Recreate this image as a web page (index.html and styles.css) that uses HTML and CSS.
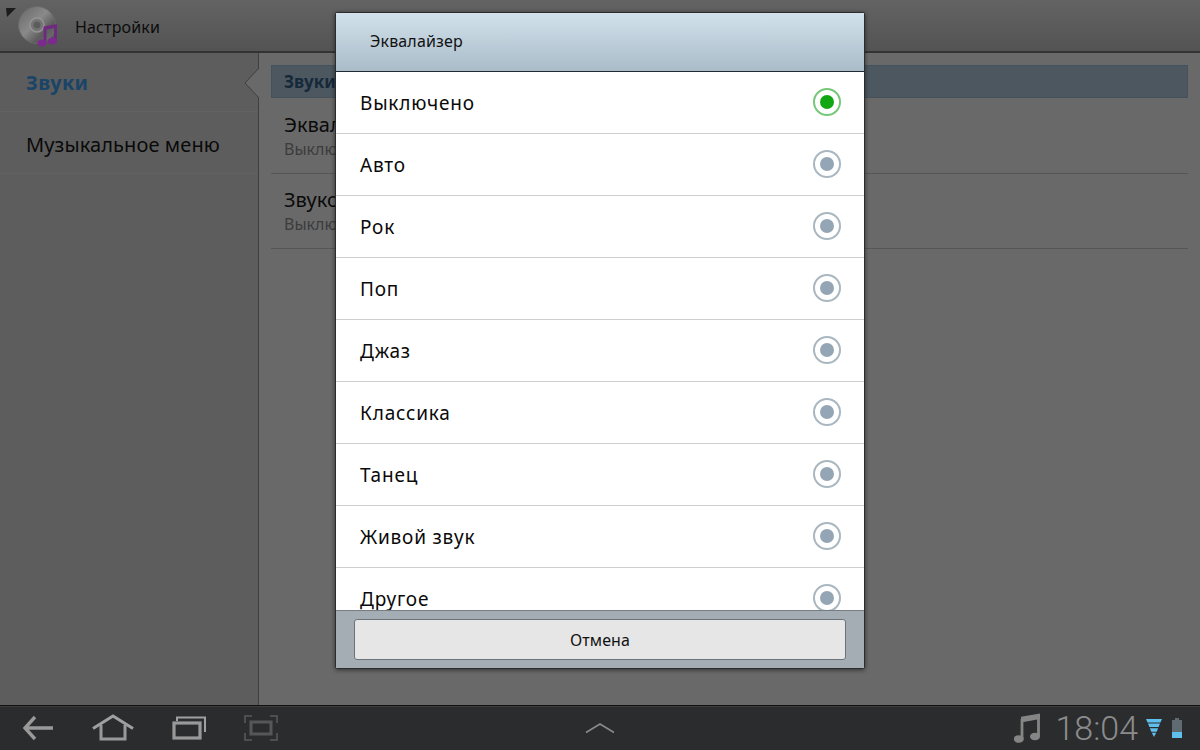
FILE: index.html
```html
<!DOCTYPE html>
<html lang="ru">
  <head>
    <meta charset="UTF-8" />
    <meta name="viewport" content="width=device-width, initial-scale=1.0" />
    <title>Настройки</title>
    <link rel="stylesheet" href="styles.css">
  </head>
  <body>
    <div class="screen">
      <!-- Title bar -->
      <header class="topbar">
        <svg class="corner" width="11" height="10" viewBox="0 0 11 10"><path d="M0 0H10L1 9Z" fill="#1c1c1c"/></svg>
        <svg class="app-icon" width="44" height="44" viewBox="0 0 44 44">
          <defs>
            <linearGradient id="disc" x1="0" y1="0" x2="1" y2="1">
              <stop offset="0" stop-color="#666"/>
              <stop offset="0.45" stop-color="#8a8a8a"/>
              <stop offset="0.7" stop-color="#5c5c5c"/>
              <stop offset="1" stop-color="#777"/>
            </linearGradient>
          </defs>
          <circle cx="19" cy="20" r="18.500" fill="url(#disc)" stroke="#6a6a6a"/>
          <circle cx="19" cy="20" r="7" fill="#757575" stroke="#949494" stroke-width="1.500"/>
          <circle cx="19" cy="20" r="3.500" fill="#5c5c5c"/>
          <path d="M27 23V37M37.500 21V35" fill="none" stroke="#6f2a80" stroke-width="2.800"/>
          <path d="M25.600 21.500L39 19V22.500L25.600 25Z" fill="#6f2a80"/>
          <ellipse cx="24" cy="38" rx="4.800" ry="3.500" fill="#7c2a8e"/>
          <ellipse cx="34.500" cy="36" rx="4.800" ry="3.500" fill="#7c2a8e"/>
        </svg>
        <span class="app-title">Настройки</span>
      </header>

      <main class="body">
        <!-- Left menu -->
        <nav class="sidebar">
          <div class="side-item side-item-active">Звуки</div>
          <div class="side-item">Музыкальное меню</div>
          <svg class="side-arrow" width="15" height="30" viewBox="0 0 15 30"><path d="M15 0L1 15L15 30Z" fill="#696969"/><path d="M15 0L1 15L15 30" fill="none" stroke="#3f3f3f"/></svg>
        </nav>

        <!-- Settings list -->
        <section class="content">
          <div class="section-title">Звуки</div>
          <div class="setting">
            <div class="setting-name">Эквалайзер</div>
            <div class="setting-value">Выключено</div>
          </div>
          <div class="setting">
            <div class="setting-name">Звуковой эффект</div>
            <div class="setting-value">Выключено</div>
          </div>
        </section>
      </main>

      <!-- System bar -->
      <footer class="sysbar">
        <div class="nav-buttons">
          <svg width="32" height="28" viewBox="0 0 32 28"><path d="M13 3L3 14L13 25M3 14H31" fill="none" stroke="#999" stroke-width="3.400"/></svg>
          <svg width="42" height="28" viewBox="0 0 42 28"><path d="M1 14.500L21 2L41 14.500" fill="none" stroke="#a0a0a0" stroke-width="3"/><path d="M9 11V25H33V11" fill="none" stroke="#999" stroke-width="3"/></svg>
          <svg width="34" height="28" viewBox="0 0 34 28"><path d="M5 7V3.500H33V18" fill="none" stroke="#a0a0a0" stroke-width="2"/><rect x="2" y="9" width="26" height="15" fill="none" stroke="#999" stroke-width="3.200"/></svg>
          <svg width="34" height="28" viewBox="0 0 34 28"><path d="M1 9V2H8M26 2H33V9M1 19V26H8M26 26H33V19" fill="none" stroke="#4e4e4e" stroke-width="2"/><rect x="7" y="8" width="20" height="12" fill="none" stroke="#575757" stroke-width="3"/></svg>
        </div>
        <svg class="chevron" width="30" height="12" viewBox="0 0 30 12"><path d="M1 10.500L15 2L29 10.500" fill="none" stroke="#8a8a8a" stroke-width="1.600"/></svg>
        <div class="tray">
          <svg width="28" height="30" viewBox="0 0 28 30"><path d="M9 6V26" fill="none" stroke="#858585" stroke-width="2.800"/><path d="M25.500 2V23" fill="none" stroke="#858585" stroke-width="2.800"/><path d="M8 3.800L27 0.500V6L8 9.500Z" fill="#858585"/><ellipse cx="5.800" cy="26" rx="5" ry="3.800" fill="#858585"/><ellipse cx="22" cy="23.500" rx="5" ry="3.800" fill="#858585"/></svg>
          <span class="clock">18:04</span>
          <svg class="wifi" width="16" height="18" viewBox="0 0 16 18"><path d="M0 0H16L14.500 3.500H1.500Z" fill="#5fc0ee"/><path d="M2 4.600H14L12.600 8.100H3.400Z" fill="#5fc0ee"/><path d="M3.900 9.200H12.100L10.700 12.700H5.300Z" fill="#5fc0ee"/><path d="M5.800 13.800H10.200L8 18Z" fill="#5fc0ee"/></svg>
          <svg class="battery" width="10" height="20" viewBox="0 0 10 20"><rect x="3" y="0" width="4" height="2" fill="#5f6b70"/><rect x="0" y="2" width="10" height="12" fill="#5f6b70"/><rect x="0" y="14" width="10" height="6" fill="#5fc0ee"/></svg>
        </div>
      </footer>

      <!-- Equalizer dialog -->
      <div class="dialog">
        <div class="dialog-title">Эквалайзер</div>
        <ul class="options">
          <li class="option option-on">Выключено<span class="radio"></span></li>
          <li class="option">Авто<span class="radio"></span></li>
          <li class="option">Рок<span class="radio"></span></li>
          <li class="option">Поп<span class="radio"></span></li>
          <li class="option">Джаз<span class="radio"></span></li>
          <li class="option">Классика<span class="radio"></span></li>
          <li class="option">Танец<span class="radio"></span></li>
          <li class="option">Живой звук<span class="radio"></span></li>
          <li class="option">Другое<span class="radio"></span></li>
        </ul>
        <div class="dialog-footer">
          <button class="cancel" type="button">Отмена</button>
        </div>
      </div>
    </div>
  </body>
</html>
```

FILE: styles.css
```css
* {
  box-sizing: border-box;
}

body {
  margin: 0;
  font-family: "Noto Sans", "Open Sans", sans-serif;
  background-color: #696969;
  color: #0a0a0a;
}

.screen {
  position: relative;
  width: 1200px;
  height: 750px;
  overflow: hidden;
  display: flex;
  flex-direction: column;
}

/* title bar */
.topbar {
  position: relative;
  height: 53px;
  flex: none;
  display: flex;
  align-items: center;
  padding-left: 18px;
  background: linear-gradient(#636363, #535353);
  border-bottom: 2px solid #333;
}

.corner {
  position: absolute;
  left: 6px;
  top: 8px;
}

.app-icon {
  flex: none;
  margin-top: 2px;
}

.app-title {
  margin-top: 2px;
  margin-left: 13px;
  font-size: 16px;
  color: #0c0c0c;
  letter-spacing: 0.15px;
}

.body {
  flex: 1;
  display: flex;
  min-height: 0;
}

/* left menu */
.sidebar {
  position: relative;
  width: 259px;
  flex: none;
  background-color: #5d5d5d;
  border-right: 1px solid #3f3f3f;
}

.side-item {
  height: 59px;
  padding-left: 26px;
  display: flex;
  align-items: center;
  font-size: 20px;
  letter-spacing: 0.1px;
  border-bottom: 1px solid #626262;
}

.side-item + .side-item {
  height: 62px;
  padding-top: 4px;
}

.side-item-active {
  color: #1a4468;
  font-weight: 700;
  letter-spacing: 0.3px;
}

.side-arrow {
  position: absolute;
  right: -1px;
  top: 15px;
}

/* settings */
.content {
  flex: 1;
  padding: 12px 12px 0;
  background-color: #696969;
}

.section-title {
  height: 33px;
  margin-bottom: 1px;
  padding-left: 12px;
  line-height: 31px;
  font-size: 17px;
  font-weight: 700;
  color: #16293a;
  background-color: #4c5760;
  border: 1px solid #46525b;
}

.setting {
  height: 75px;
  padding: 13px 13px 0;
  border-bottom: 1px solid #565656;
}

.setting-name {
  font-size: 20px;
  line-height: 26px;
  color: #0a0a0a;
}

.setting-value {
  font-size: 16px;
  line-height: 22px;
  color: #3c3c3c;
}

/* system bar */
.sysbar {
  position: relative;
  height: 45px;
  flex: none;
  display: flex;
  align-items: center;
  justify-content: space-between;
  background-color: #2b2c2e;
  border-top: 1px solid #111;
  box-shadow: inset 0 1px 0 #3c3c3c;
}

.nav-buttons {
  display: flex;
  align-items: center;
  gap: 38px;
  padding-left: 22px;
}

.chevron {
  position: absolute;
  left: 585px;
  top: 16px;
}

.tray {
  display: flex;
  align-items: center;
  padding-right: 18px;
}

.clock {
  margin-left: 14px;
  font-family: Roboto, "Liberation Sans", sans-serif;
  font-weight: 300;
  font-size: 34px;
  line-height: 40px;
  color: #8c8c8c;
}

.wifi {
  margin-left: 8px;
}

.battery {
  margin-left: 10px;
}

/* dialog, sits over the dimmed page */
.dialog {
  position: absolute;
  left: 335px;
  top: 12px;
  width: 530px;
  height: 657px;
  display: flex;
  flex-direction: column;
  border: 1px solid #2c2c2c;
  border-radius: 2px;
  box-shadow: 0 1px 4px rgba(0, 0, 0, 0.55);
  background-color: #fff;
}

.dialog-title {
  height: 59px;
  flex: none;
  padding-left: 34px;
  line-height: 56px;
  font-size: 16px;
  letter-spacing: 0.15px;
  color: #111;
  background: linear-gradient(#d2e1ec, #a9bcc8);
  border-bottom: 1px solid #1d2a33;
}

.options {
  flex: 1;
  min-height: 0;
  margin: 0;
  padding: 0;
  list-style: none;
  overflow: hidden;
}

.option {
  height: 62px;
  display: flex;
  align-items: center;
  justify-content: space-between;
  padding: 0 23px 0 24px;
  font-size: 19px;
  letter-spacing: 0.8px;
  border-bottom: 1px solid #cfcfcf;
}

.radio {
  width: 28px;
  height: 28px;
  margin-bottom: 2px;
  border: 2px solid #a9b7c0;
  border-radius: 50%;
  display: flex;
  align-items: center;
  justify-content: center;
}

.radio::after {
  content: "";
  width: 14px;
  height: 14px;
  border-radius: 50%;
  background-color: #94a6b5;
}

.option-on .radio {
  border-color: #76c878;
}

.option-on .radio::after {
  background-color: #13a613;
}

.dialog-footer {
  height: 58px;
  flex: none;
  padding: 8px 18px 0;
  background-color: #a3adb3;
  border-top: 1px solid #767e83;
}

.cancel {
  display: block;
  width: 100%;
  height: 41px;
  padding: 0;
  font-family: inherit;
  font-size: 16px;
  letter-spacing: 0.1px;
  color: #111;
  background-color: #e6e6e6;
  border: 1px solid #6d7479;
  border-radius: 3px;
}
```
